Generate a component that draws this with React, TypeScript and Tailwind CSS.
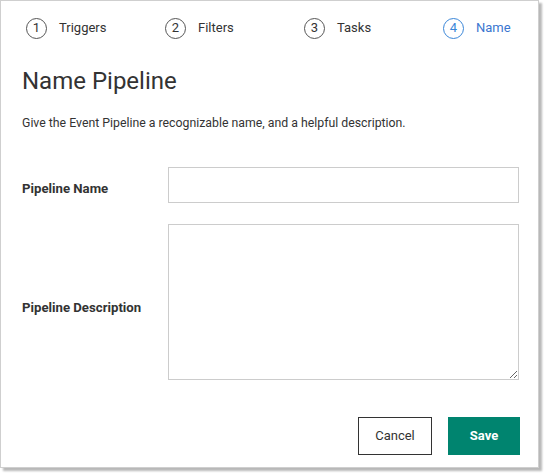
export default function App() {
  const steps = [
    { n: 1, label: "Triggers" },
    { n: 2, label: "Filters" },
    { n: 3, label: "Tasks" },
    { n: 4, label: "Name", active: true },
  ];

  return (
    <div className="w-[547px] h-[476px] bg-white font-['Roboto',sans-serif]">
      <div className="w-[539px] h-[468px] border border-[#cfcfcf] bg-white shadow-[3px_3px_2px_rgba(0,0,0,0.28)] flex flex-col">
        {/* Steps */}
        <div className="flex pl-[25px] pt-[16px] h-[38px]">
          {steps.map((s) => (
            <div
              key={s.n}
              className={s.active ? "flex items-center" : "w-[139px] shrink-0 flex items-center"}
            >
              <span
                className={
                  s.active
                    ? "w-[21px] h-[21px] rounded-full border-[1.5px] border-[#3a86d8] text-[#3a86d8] flex items-center justify-center text-[13px]"
                    : "w-[21px] h-[21px] rounded-full border-[1.5px] border-[#555] text-[#333] flex items-center justify-center text-[13px]"
                }
              >
                {s.n}
              </span>
              <span
                className={
                  s.active
                    ? "ml-[12px] text-[13px] text-[#3a76d0]"
                    : "ml-[12px] text-[13px] text-[#333]"
                }
              >
                {s.label}
              </span>
            </div>
          ))}
        </div>

        {/* Content */}
        <div className="pl-[21px] pr-[19px]">
          <h1 className="mt-[27px] text-[24px] leading-[30px] text-[#333]">
            Name Pipeline
          </h1>
          <p className="mt-[19px] text-[12.3px] leading-[16px] text-[#333]">
            Give the Event Pipeline a recognizable name, and a helpful description.
          </p>

          <div className="mt-[36px] flex items-center">
            <label className="w-[146px] shrink-0 pt-[8px] text-[13.2px] font-bold text-[#333]">
              Pipeline Name
            </label>
            <input className="w-[351px] h-[36px] shrink-0 border border-[#cccccc] outline-none" />
          </div>

          <div className="mt-[21px] flex items-center">
            <label className="w-[146px] shrink-0 pt-[12px] text-[13.2px] font-bold text-[#333]">
              Pipeline Description
            </label>
            <textarea className="w-[351px] h-[156px] shrink-0 border border-[#cccccc] outline-none" />
          </div>

          <div className="mt-[37px] flex justify-end gap-[16px] mr-[-1px]">
            <button className="w-[74px] h-[38px] border border-[#333] text-[13px] text-[#333] bg-white">
              Cancel
            </button>
            <button className="w-[72px] h-[38px] bg-[#00846f] text-white text-[13px] font-bold">
              Save
            </button>
          </div>
        </div>
      </div>
    </div>
  );
}
